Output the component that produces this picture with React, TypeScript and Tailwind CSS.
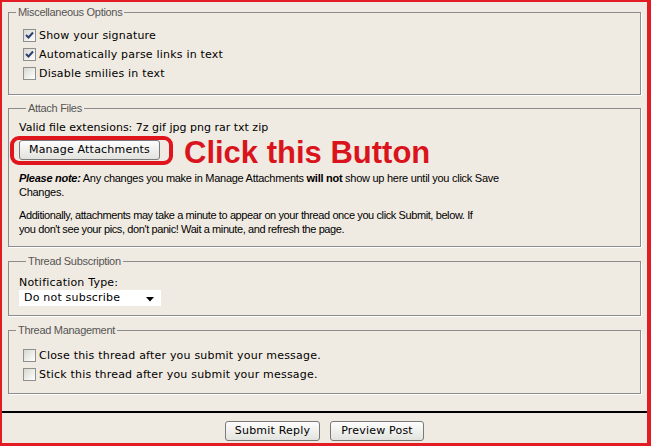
import React from "react";

const verdana = { fontFamily: '"DejaVu Sans", Verdana, sans-serif' };
const tahoma = { fontFamily: '"Liberation Sans", Arial, sans-serif' };

function Check({ checked }: { checked?: boolean }) {
  return (
    <span className="relative inline-block w-[13px] h-[13px] shrink-0 border border-[#8f8f8f] bg-gradient-to-br from-[#d8d8d0] to-[#ffffff]">
      {checked && (
        <svg className="absolute left-[1px] top-[1px]" width="9" height="9" viewBox="0 0 9 9">
          <path d="M1 4 L3.5 6.5 L8 1.5" stroke="#2b3f73" strokeWidth="2" fill="none" />
        </svg>
      )}
    </span>
  );
}

function Row({ checked, label }: { checked?: boolean; label: string }) {
  return (
    <div className="flex items-center h-[19px] pl-[14px] gap-[3px]">
      <Check checked={checked} />
      <span className="text-[11px] leading-[14px] text-black tracking-[0.2px]" style={verdana}>
        {label}
      </span>
    </div>
  );
}

function Box({ title, className, children }: { title: string; className?: string; children: React.ReactNode }) {
  return (
    <fieldset className={`mx-[6px] border border-[#8c8c8c] shadow-[1px_1px_0_#ffffff] ${className ?? ""}`}>
      <legend
        className="ml-[7px] px-[2px] text-[11px] leading-[13px] text-[#555555] tracking-[-0.3px]"
        style={tahoma}
      >
        {title}
      </legend>
      {children}
    </fieldset>
  );
}

function XpButton({ children, className }: { children: React.ReactNode; className?: string }) {
  return (
    <button
      className={`h-[20px] rounded-[3px] border border-[#7a7a7a] bg-gradient-to-b from-[#fdfdfd] to-[#e2e2de] text-[11px] text-black tracking-[0.2px] flex items-center justify-center ${className ?? ""}`}
      style={verdana}
    >
      {children}
    </button>
  );
}

export default function App() {
  return (
    <div className="w-[651px] h-[446px] overflow-hidden border-t-2 border-l-2 border-r-4 border-b-[3px] border-[#e31b23] bg-[#f0ebe2] flex flex-col">
      <Box title="Miscellaneous Options" className="mt-[4px] pt-[7px] pb-[11px]">
        <Row checked label="Show your signature" />
        <Row checked label="Automatically parse links in text" />
        <Row label="Disable smilies in text" />
      </Box>

      <Box title="Attach Files" className="mt-[7px] pt-[6px] pb-[10px] pl-[10px]">
        <div className="text-[11px] leading-[14px] text-black" style={verdana}>
          Valid file extensions: 7z gif jpg png rar txt zip
        </div>
        <div className="flex items-start mt-[5px] h-[20px]">
          <div className="relative">
            <XpButton className="w-[141px]">Manage Attachments</XpButton>
            <div className="absolute -left-[9px] -right-[13px] -top-[4px] -bottom-[5px] border-4 border-[#e0141c] rounded-[9px]" />
          </div>
          <div
            className="relative top-[3px] ml-[24px] text-[31px] leading-[20px] font-bold text-[#d9141c]"
            style={tahoma}
          >
            Click this Button
          </div>
        </div>
        <div className="mt-[11px] text-[11px] leading-[14px] text-black tracking-[-0.27px]" style={tahoma}>
          <p>
            <b>
              <i>Please note:</i>
            </b>{" "}
            Any changes you make in Manage Attachments <b>will not</b> show up here until you click Save
            <br />
            Changes.
          </p>
          <p className="mt-[9px] tracking-[-0.4px]">
            Additionally, attachments may take a minute to appear on your thread once you click Submit, below. If
            <br />
            you don't see your pics, don't panic! Wait a minute, and refresh the page.
          </p>
        </div>
      </Box>

      <Box title="Thread Subscription" className="mt-[8px] pt-[8px] pb-[9px] pl-[10px]">
        <div className="text-[11px] leading-[14px] text-black tracking-[0.2px]" style={verdana}>
          Notification Type:
        </div>
        <div className="w-[142px] h-[16px] bg-white flex items-center justify-between pl-[5px] pr-[7px]">
          <span className="text-[11px] leading-[14px] text-black tracking-[0.2px]" style={verdana}>
            Do not subscribe
          </span>
          <svg width="8" height="5" viewBox="0 0 8 5" className="mt-[3px]">
            <polygon points="0,0 8,0 4,4.5" fill="#000" />
          </svg>
        </div>
      </Box>

      <Box title="Thread Management" className="mt-[8px] pt-[9px] pb-[9px]">
        <Row label="Close this thread after you submit your message." />
        <Row label="Stick this thread after you submit your message." />
      </Box>

      <div className="mt-[17px] h-[2px] bg-black" />

      <div className="mt-[8px] flex justify-center gap-[10px]">
        <XpButton className="w-[95px]">Submit Reply</XpButton>
        <XpButton className="w-[94px]">Preview Post</XpButton>
      </div>
    </div>
  );
}
